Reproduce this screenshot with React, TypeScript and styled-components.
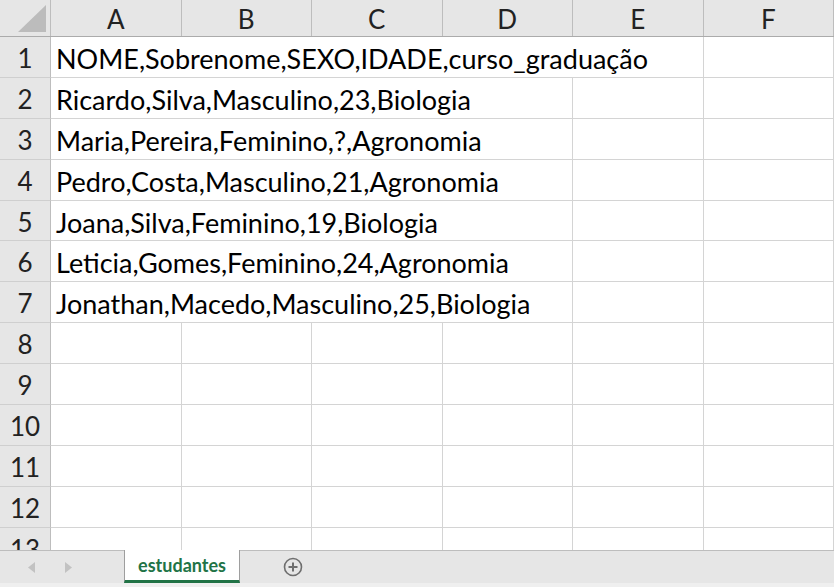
import styled, { createGlobalStyle } from "styled-components";

const GlobalStyle = createGlobalStyle`
  html, body {
    margin: 0;
    padding: 0;
    background: #ffffff;
    overflow: hidden;
  }
  body {
    font-family: Lato, "Liberation Sans", sans-serif;
  }
`;

const COLS = ["A", "B", "C", "D", "E", "F"];
const TEMPLATE = "51px repeat(6, 130.5px)";

const Window = styled.div`
  width: 834px;
  height: 587px;
  display: flex;
  flex-direction: column;
  overflow: hidden;
`;

const Sheet = styled.div`
  height: 550px;
  overflow: hidden;
  display: flex;
  flex-direction: column;
`;

const HeaderRow = styled.div`
  display: grid;
  grid-template-columns: ${TEMPLATE};
  height: 37px;
  box-sizing: border-box;
  background: #e6e6e6;
  border-bottom: 1px solid #ababab;
  flex-shrink: 0;
`;

const Corner = styled.div`
  border-right: 1px solid #bdbdbd;
  display: flex;
  align-items: flex-end;
  justify-content: flex-end;
  padding: 0 4px 4px 0;
`;

const ColHeader = styled.div`
  border-right: 1px solid #bdbdbd;
  display: flex;
  align-items: center;
  justify-content: center;
  font-size: 26px;
  color: #222;
  padding-top: 2px;
`;

const Row = styled.div`
  display: grid;
  grid-template-columns: ${TEMPLATE};
  height: 40.9px;
  flex-shrink: 0;
`;

const RowHeader = styled.div`
  background: #e6e6e6;
  border-right: 1px solid #bdbdbd;
  border-bottom: 1px solid #cfcfcf;
  display: flex;
  align-items: center;
  justify-content: center;
  font-size: 26px;
  color: #222;
  padding-top: 2px;
`;

const Cell = styled.div<{ $span: number }>`
  grid-column: span ${(p) => p.$span};
  border-right: 1px solid #d4d4d4;
  border-bottom: 1px solid #d4d4d4;
  display: flex;
  align-items: center;
  padding: 3px 0 0 5px;
  font-size: 27px;
  color: #000;
  white-space: nowrap;
  overflow: visible;
`;

const TabBar = styled.div`
  height: 37px;
  box-sizing: border-box;
  background: #e6e6e6;
  border-top: 1px solid #bdbdbd;
  border-bottom: 4px solid #efefef;
  display: flex;
  align-items: stretch;
`;

const Nav = styled.div`
  width: 124px;
  display: flex;
  align-items: center;
  padding-left: 28px;
  gap: 30px;
  box-sizing: border-box;
`;

const Tab = styled.div`
  width: 116px;
  margin-top: -1px;
  box-sizing: border-box;
  background: #ffffff;
  border-left: 1px solid #9e9e9e;
  border-right: 1px solid #9e9e9e;
  border-bottom: 3px solid #217346;
  display: flex;
  align-items: center;
  justify-content: center;
  font-size: 18px;
  font-weight: 700;
  color: #217346;
`;

const AddButton = styled.div`
  margin-left: 43px;
  display: flex;
  align-items: center;
`;

const rows: { text: string; span: number }[] = [
  { text: "NOME,Sobrenome,SEXO,IDADE,curso_graduação", span: 5 },
  { text: "Ricardo,Silva,Masculino,23,Biologia", span: 4 },
  { text: "Maria,Pereira,Feminino,?,Agronomia", span: 4 },
  { text: "Pedro,Costa,Masculino,21,Agronomia", span: 4 },
  { text: "Joana,Silva,Feminino,19,Biologia", span: 4 },
  { text: "Leticia,Gomes,Feminino,24,Agronomia", span: 4 },
  { text: "Jonathan,Macedo,Masculino,25,Biologia", span: 4 },
];

const App = () => {
  const allRows = Array.from({ length: 13 }, (_, i) => rows[i] ?? { text: "", span: 1 });

  return (
    <Window>
      <GlobalStyle />
      <Sheet>
        <HeaderRow>
          <Corner>
            <svg width="28" height="27" viewBox="0 0 28 27">
              <polygon points="28,0 28,27 0,27" fill="#bcbcbc" />
            </svg>
          </Corner>
          {COLS.map((c) => (
            <ColHeader key={c}>{c}</ColHeader>
          ))}
        </HeaderRow>
        {allRows.map((row, i) => (
          <Row key={i}>
            <RowHeader>{i + 1}</RowHeader>
            <Cell $span={row.span}>{row.text}</Cell>
            {Array.from({ length: 6 - row.span }, (_, j) => (
              <Cell key={j} $span={1} />
            ))}
          </Row>
        ))}
      </Sheet>
      <TabBar>
        <Nav>
          <svg width="7" height="11" viewBox="0 0 7 11">
            <polygon points="7,0 7,11 0,5.5" fill="#c2c2c2" />
          </svg>
          <svg width="7" height="11" viewBox="0 0 7 11">
            <polygon points="0,0 0,11 7,5.5" fill="#c2c2c2" />
          </svg>
        </Nav>
        <Tab>estudantes</Tab>
        <AddButton>
          <svg width="20" height="20" viewBox="0 0 20 20">
            <circle cx="10" cy="10" r="8.5" fill="none" stroke="#6e6e6e" strokeWidth="1.6" />
            <path d="M10 5.5v9M5.5 10h9" stroke="#6e6e6e" strokeWidth="2" />
          </svg>
        </AddButton>
      </TabBar>
    </Window>
  );
};

export default App;
